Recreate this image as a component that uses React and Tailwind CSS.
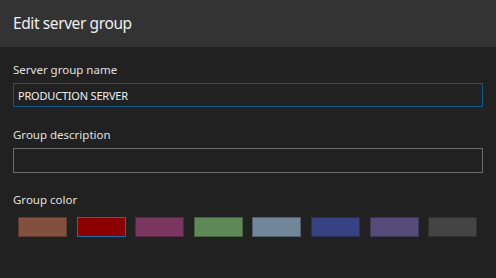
import { useState } from "react";

const colors = [
  { hex: "#83503f", border: "#5e3a2e" },
  { hex: "#8b0000", border: "#1f5f9a" },
  { hex: "#7a3860", border: "#552743" },
  { hex: "#5f8a58", border: "#43633e" },
  { hex: "#718699", border: "#4f5f6d" },
  { hex: "#374283", border: "#272f5e" },
  { hex: "#574c79", border: "#3e3656" },
  { hex: "#444444", border: "#303030" },
];

const App = () => {
  const [name, setName] = useState("PRODUCTION SERVER");
  const [description, setDescription] = useState("");
  const [selected, setSelected] = useState(1);

  return (
    <div
      className="w-[496px] h-[278px] bg-[#212121] text-[#e6e6e6] overflow-hidden"
      style={{ fontFamily: '"Noto Sans", "Open Sans", sans-serif' }}
    >
      {/* Header */}
      <div className="h-[47px] bg-[#333333] flex items-center px-[13px]">
        <h1 className="text-[15.5px] tracking-[-0.4px] leading-none text-[#f0f0f0] mt-[1px]">
          Edit server group
        </h1>
      </div>

      {/* Form */}
      <div className="px-[13px] pt-[16px]">
        <label className="block text-[11.5px] leading-[14px] text-[#e0e0e0]">
          Server group name
        </label>
        <input
          value={name}
          onChange={(e) => setName(e.target.value)}
          className="mt-[6px] w-[470px] h-[24px] bg-[#212121] border border-[#0e5a8a] px-[4px] text-[11px] tracking-[-0.2px] text-[#f0f0f0] outline-none"
        />

        <label className="block mt-[21px] text-[11.5px] leading-[14px] text-[#e0e0e0]">
          Group description
        </label>
        <input
          value={description}
          onChange={(e) => setDescription(e.target.value)}
          className="mt-[6px] w-[470px] h-[25px] bg-[#212121] border border-[#6b6b6b] px-[4px] text-[11px] text-[#f0f0f0] outline-none"
        />

        <label className="block mt-[20px] text-[11.5px] leading-[14px] text-[#e0e0e0]">
          Group color
        </label>
        <div className="mt-[10px] ml-[5px] flex gap-[9.6px]">
          {colors.map((c, i) => (
            <button
              key={c.hex}
              onClick={() => setSelected(i)}
              className="w-[49px] h-[20px] border"
              style={{
                backgroundColor: c.hex,
                borderColor: i === selected ? "#1f6aa8" : c.border,
              }}
            />
          ))}
        </div>
      </div>
    </div>
  );
};

export default App;
